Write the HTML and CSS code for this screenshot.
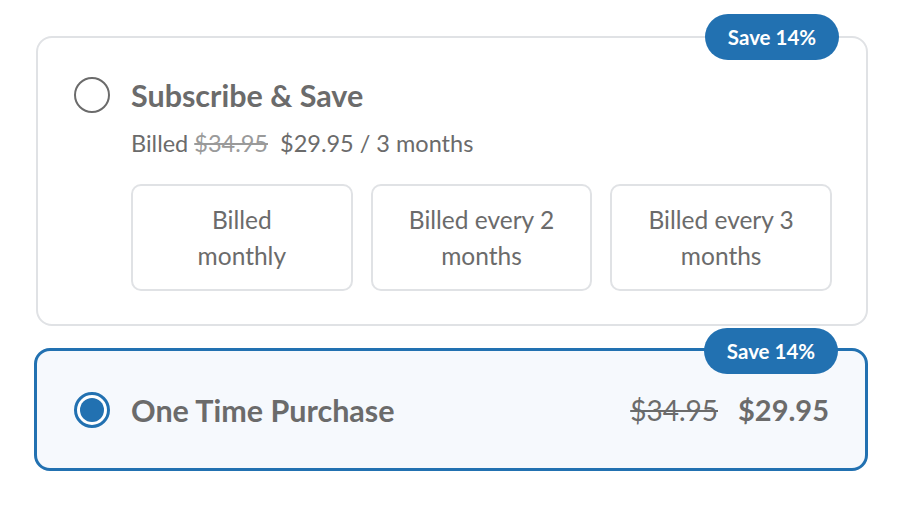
FILE: index.html
```html
<!DOCTYPE html>
<html lang="en">
<head>
<meta charset="utf-8">
<title>Purchase options</title>
<link rel="stylesheet" href="styles.css">
</head>
<body>
<div class="options">
  <div class="card card-sub">
    <span class="badge">Save 14%</span>
    <div class="head">
      <span class="radio"></span>
      <span class="title">Subscribe &amp; Save</span>
    </div>
    <div class="sub">Billed <s class="old">$34.95</s>&nbsp; $29.95 / 3 months</div>
    <div class="freqs">
      <div class="freq">Billed<br>monthly</div>
      <div class="freq">Billed every 2<br>months</div>
      <div class="freq">Billed every 3<br>months</div>
    </div>
  </div>
  <div class="card card-one">
    <span class="badge">Save 14%</span>
    <div class="head">
      <span class="radio radio-on"><span class="dot"></span></span>
      <span class="title">One Time Purchase</span>
      <span class="prices"><s class="price-old">$34.95</s><b class="price-new">$29.95</b></span>
    </div>
  </div>
</div>
</body>
</html>
```
FILE: styles.css
```css
* { box-sizing: border-box; }
html, body { margin: 0; padding: 0; background: #fff; }
body {
  font-family: Lato, "Source Sans Pro", "Open Sans", sans-serif;
  color: #6b6b6b;
}
.options {
  width: 832px;
  margin: 36px 0 0 36px;
  display: flex;
  flex-direction: column;
  gap: 22px;
}
.card {
  position: relative;
  border-radius: 16px;
}
.card-sub {
  border: 2px solid #e0e2e5;
  padding: 39px 34px 33px 36px;
}
.card-one {
  margin-left: -2px;
  border: 3px solid #2271b1;
  background: #f6f9fd;
  padding: 0 36px 0 37px;
  height: 123px;
  display: flex;
  align-items: center;
}
.badge {
  position: absolute;
  right: 27px;
  top: -24px;
  width: 134px;
  height: 46px;
  border-radius: 23px;
  background: #2271b1;
  color: #fff;
  font-weight: 700;
  font-size: 20.5px;
  display: flex;
  align-items: center;
  justify-content: center;
}
.card-one .badge { top: -23px; }
.head {
  display: flex;
  align-items: center;
  height: 36px;
  flex: 1;
}
.radio {
  width: 36px;
  height: 36px;
  border-radius: 50%;
  border: 2px solid #6b6b6b;
  flex: none;
  margin-right: 21px;
  display: flex;
  align-items: center;
  justify-content: center;
}
.radio-on {
  border: 3px solid #2271b1;
  background: #fff;
}
.dot {
  width: 24px;
  height: 24px;
  border-radius: 50%;
  background: #2271b1;
}
.title {
  font-weight: 700;
  font-size: 30.5px;
  line-height: 36px;
  flex: 1;
}
.sub {
  margin: 15px 0 0 57px;
  font-size: 23.5px;
  line-height: 30px;
}
.old { color: #9a9a9a; }
.freqs {
  margin: 26px 0 0 57px;
  display: grid;
  grid-template-columns: repeat(3, 1fr);
  gap: 18px;
}
.freq {
  border: 2px solid #e0e2e5;
  border-radius: 10px;
  height: 107px;
  display: flex;
  align-items: center;
  justify-content: center;
  text-align: center;
  font-size: 24.5px;
  line-height: 36px;
}
.prices {
  display: flex;
  align-items: baseline;
  gap: 20px;
  font-size: 29px;
}
.price-old { color: #6b6b6b; font-size: 28px; }
.price-new { font-weight: 700; }
```
